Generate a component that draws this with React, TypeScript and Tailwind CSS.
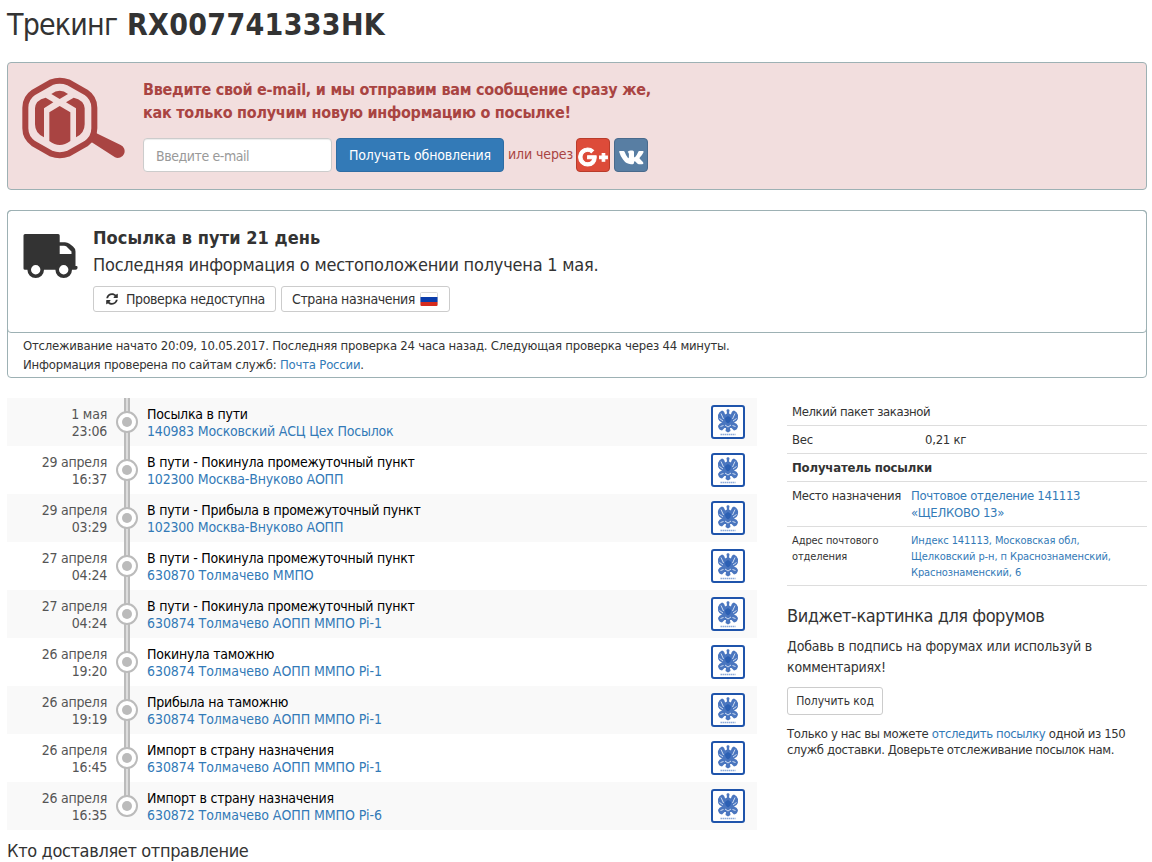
import type { ReactNode } from "react";
import { FaGooglePlusG, FaSyncAlt } from "react-icons/fa";

type TrackEvent = { date: string; time: string; status: string; place: string };

const events: TrackEvent[] = [
  { date: "1 мая", time: "23:06", status: "Посылка в пути", place: "140983 Московский АСЦ Цех Посылок" },
  { date: "29 апреля", time: "16:37", status: "В пути - Покинула промежуточный пункт", place: "102300 Москва-Внуково АОПП" },
  { date: "29 апреля", time: "03:29", status: "В пути - Прибыла в промежуточный пункт", place: "102300 Москва-Внуково АОПП" },
  { date: "27 апреля", time: "04:24", status: "В пути - Покинула промежуточный пункт", place: "630870 Толмачево ММПО" },
  { date: "27 апреля", time: "04:24", status: "В пути - Покинула промежуточный пункт", place: "630874 Толмачево АОПП ММПО Pi-1" },
  { date: "26 апреля", time: "19:20", status: "Покинула таможню", place: "630874 Толмачево АОПП ММПО Pi-1" },
  { date: "26 апреля", time: "19:19", status: "Прибыла на таможню", place: "630874 Толмачево АОПП ММПО Pi-1" },
  { date: "26 апреля", time: "16:45", status: "Импорт в страну назначения", place: "630874 Толмачево АОПП ММПО Pi-1" },
  { date: "26 апреля", time: "16:35", status: "Импорт в страну назначения", place: "630872 Толмачево АОПП ММПО Pi-6" },
];

function SearchParcelLogo() {
  return (
    <svg viewBox="36 36 309 246" className="h-[82px] w-[103px]" fill="#a94442">
      <path
        d="M124 52 Q149 42 175 52 L228 82 Q253 99 253 128 V190 Q253 219 228 236 L175 266 Q149 275 124 266 L71 236 Q46 219 46 190 V128 Q46 99 71 82 Z"
        fill="none"
        stroke="#a94442"
        strokeWidth="18"
      />
      <path d="M258 204 L332 240 A20 20 0 0 1 315 277 L244 231 Z" />
      <path d="M124 87 Q149 68 174 87 L149 102 Z" />
      <path d="M149 123 L181 142 V228 Q149 252 118 228 V142 Z" />
      <path d="M107 98 L130 112 L102 130 V217 Q75 205 75 178 V130 Q76 105 107 98 Z" />
      <path d="M191 98 L168 112 L198 130 V217 Q224 205 224 178 V130 Q222 105 191 98 Z" />
    </svg>
  );
}

function Truck() {
  return (
    <svg viewBox="0 0 55 46" className="h-[46px] w-[55px]">
      <path
        fill="#333"
        fillRule="evenodd"
        d="M2 1 H35.200 Q36.700 1 36.700 2.500 V9.300 H42 Q44.500 9.300 46.500 10.800 L50 13.500 Q52.500 15.500 52.500 18.500 V33 H53.500 Q54.500 33 54.500 34 V35 Q54.500 36.800 52.500 36.800 H2 Q.500 36.800 .500 35.500 V2.500 Q.500 1 2 1 Z M36.700 12.700 V21 H48.500 V18.500 L43.500 13.500 Q42.500 12.700 41 12.700 Z"
      />
      <circle cx="12.700" cy="36.800" r="6.500" fill="#fff" stroke="#333" strokeWidth="3.600" />
      <circle cx="40.700" cy="36.800" r="6.500" fill="#fff" stroke="#333" strokeWidth="3.600" />
    </svg>
  );
}

function VkMark() {
  return (
    <svg viewBox="0 0 25 15" className="mt-[4px] h-[15px] w-[25px] shrink-0" fill="#fff">
      <path d="M.8 1 H4.600 Q5.300 1 5.600 1.800 Q7 5.800 9 8 Q9.800 8.500 9.900 7 V4 Q9.800 2.500 8.600 2 Q9.300 .5 11.500 .4 H13.500 Q15 .5 15 2 V6.500 Q15.200 7.900 16.200 7 Q18 5 19.200 2 Q19.500 1 20.300 1 H23.800 Q25 1.100 24.400 2.500 Q23.300 4.900 20.800 7.600 Q20.300 8.300 21 9 L23.900 12 Q25.200 14 23 14.300 H19.800 Q19 14.200 18.300 13.500 L16.300 11.500 Q15.100 10.900 15 12.500 Q15 14.300 13.800 14.300 H12 Q7.200 14.200 4 9.600 Q1.500 6.300 .2 2 Q0 1.100 .8 1 Z" />
    </svg>
  );
}

function RussianFlag() {
  return (
    <svg viewBox="0 0 18 14" className="h-[14px] w-[18px]">
      <rect x="0.500" y="0.500" width="17" height="13" rx="1" fill="#fff" stroke="#d9d9d9" />
      <rect x="0.500" y="5" width="17" height="5" fill="#0a3cab" />
      <path d="M.5 10 H17.500 V13 Q17.500 14 16.500 14 H1.500 Q.5 14 .5 13 Z" fill="#d52b1e" />
    </svg>
  );
}

function PostStamp() {
  return (
    <svg viewBox="0 0 34 34" className="mr-3 h-[34px] w-[34px]">
      <rect x="1" y="1" width="32" height="32" rx="2" fill="#fff" stroke="#1f54ab" strokeWidth="2" />
      <path
        fill="#4a76bf"
        d="M17 4 L18.500 5 18 8.500 20 9.500 Q20.500 6 23 5.500 Q26 6.500 27 10 Q27.500 14 25.500 16 L23 17.500 Q26 18 27 21 Q26.500 25 23 25.500 L20.500 23 19 23 19.500 26 17 27.500 14.500 26 15 23 13.500 23 11 25.500 Q7.500 25 7 21 Q8 18 11 17.500 L8.500 16 Q6.500 14 7 10 Q8 6.500 11 5.500 Q13.500 6 14 9.500 L16 8.500 15.500 5 Z"
      />
      <path
        stroke="#dce6f5"
        strokeWidth="0.900"
        fill="none"
        d="M10 8.500 L12.500 14 M24 8.500 L21.500 14 M8.500 13.500 L12 16 M25.500 13.500 L22 16 M9.500 21.500 L12.500 20.500 M24.500 21.500 L21.500 20.500 M14 20 L17 22 20 20"
      />
      <path d="M17 11 L20 13 Q20 17 17 18.500 Q14 17 14 13 Z" fill="#2c60b3" />
      <path d="M9.500 29.500 H24.500" stroke="#8ba9d8" strokeWidth="1.500" strokeDasharray="1.500 0.500" />
    </svg>
  );
}

function Link({ children, className = "" }: { children: ReactNode; className?: string }) {
  return <a className={`text-[#337ab7] ${className}`}>{children}</a>;
}

function SubscribeAlert() {
  return (
    <section className="flex h-32 rounded border border-[#9db1b4] bg-[#f2dede] pt-[14px] pl-[14px] text-[#a94442]">
      <SearchParcelLogo />
      <div className="ml-[18px]">
        <p className="pt-px text-[16px] leading-[23px] font-bold tracking-[-0.25px]">
          Введите свой e-mail, и мы отправим вам сообщение сразу же,
          <br />
          как только получим новую информацию о посылке!
        </p>
        <div className="mt-[14px] flex items-center text-[14px]">
          <input
            placeholder="Введите e-mail"
            className="h-[34px] w-[189px] rounded border border-[#ccc] bg-white px-3 pt-[1px] tracking-[-0.42px] shadow-[inset_0_1px_1px_rgba(0,0,0,0.075)] placeholder:text-[#999]"
          />
          <button className="ml-1 h-[34px] w-[168px] rounded border border-[#2e6da4] bg-[#337ab7] tracking-[-0.17px] text-white">
            Получать обновления
          </button>
          <span className="ml-1 w-[68px] pb-px tracking-[-0.12px]">или через</span>
          <button className="flex h-[34px] w-[34px] items-center justify-center rounded border border-[#b93c2b] bg-[#dd4b39] text-white">
            <FaGooglePlusG size={30} stroke="currentColor" strokeWidth={22} className="mt-[3px] shrink-0" />
          </button>
          <button className="ml-1 flex h-[34px] w-[34px] items-center justify-center rounded border border-[#496a8c] bg-[#587ea3] text-white">
            <VkMark />
          </button>
        </div>
      </div>
    </section>
  );
}

function StatusPanel() {
  return (
    <section className="mt-5 h-[168px] rounded border border-[#9db1b4]">
      <div className="-mx-px -mt-px flex h-[123px] rounded border border-[#9db1b4] pt-[22px] pl-[15px]">
        <Truck />
        <div className="-mt-[9px] ml-[15px]">
          <h2 className="text-[18px] leading-[27px] font-bold tracking-[0.06px]">Посылка в пути 21 день</h2>
          <p className="text-[18px] leading-[27px] tracking-[-0.22px]">
            Последняя информация о местоположении получена 1 мая.
          </p>
          <div className="mt-2 flex gap-[5px] text-[14px]">
            <button className="flex h-[26px] w-[183px] items-center rounded-[3px] border border-[#ccc] bg-white pl-3 tracking-[-0.37px]">
              <FaSyncAlt size={12} className="mr-2" />
              Проверка недоступна
            </button>
            <button className="flex h-[26px] w-[169px] items-center rounded-[3px] border border-[#ccc] bg-white pl-[10px] tracking-[-0.39px]">
              <span className="mr-[5px]">Страна назначения</span>
              <RussianFlag />
            </button>
          </div>
        </div>
      </div>
      <div className="pt-[3px] pl-[15px] text-[13px] leading-[19px] tracking-[-0.215px]">
        <p>Отслеживание начато 20:09, 10.05.2017. Последняя проверка 24 часа назад. Следующая проверка через 44 минуты.</p>
        <p>
          Информация проверена по сайтам служб: <Link>Почта России</Link>.
        </p>
      </div>
    </section>
  );
}

function EventRow({ event, last }: { event: TrackEvent; last: boolean }) {
  const placeTracking = event.place.includes("ММПО") ? "tracking-[-0.07px]" : "tracking-[-0.19px]";
  return (
    <li className="flex h-12 items-center text-[14px] leading-[17px] odd:bg-[#f9f9f9]">
      <div className="w-[100px] pt-[2px] text-right tracking-[-0.22px] text-[#555]">
        <div>{event.date}</div>
        <div>{event.time}</div>
      </div>
      <div className="relative ml-[9px] flex h-12 w-[22px] items-center justify-center">
        <span className={`absolute top-0 left-2 w-[6px] border-x-2 border-[#bbb] bg-[#ddd] ${last ? "h-6" : "h-12"}`} />
        <span className="relative flex h-[22px] w-[22px] items-center justify-center rounded-full border-2 border-[#bbb] bg-white">
          <span className="h-[10px] w-[10px] rounded-full bg-[#bbb]" />
        </span>
      </div>
      <div className="ml-[9px] flex-1 pt-[2px]">
        <div className="tracking-[-0.24px] text-black">{event.status}</div>
        <Link className={`block ${placeTracking}`}>{event.place}</Link>
      </div>
      <PostStamp />
    </li>
  );
}

function Sidebar() {
  return (
    <aside className="ml-[30px] w-[360px]">
      <div className="text-[13px] leading-[17px]">
        <div className="h-7 border-b border-[#ddd] pt-[5px] pl-[5px] tracking-[-0.4px]">Мелкий пакет заказной</div>
        <div className="flex h-7 border-b border-[#ddd] pt-[5px] pl-[5px] tracking-[-0.25px]">
          <span className="w-[133px]">Вес</span>
          <span>0,21 кг</span>
        </div>
        <div className="h-7 border-b border-[#ddd] pt-[5px] pl-[5px] font-bold tracking-[-0.17px]">Получатель посылки</div>
        <div className="flex h-[45px] border-b border-[#ddd] pt-[5px] pl-[5px] tracking-[-0.29px]">
          <span className="w-[119px]">Место назначения</span>
          <Link>
            Почтовое отделение 141113
            <br />
            «ЩЕЛКОВО 13»
          </Link>
        </div>
        <div className="flex h-[59px] border-b border-[#ddd] pt-[6px] pl-[5px] text-[11px] leading-[16px] tracking-[-0.1px]">
          <span className="w-[119px]">
            Адрес почтового
            <br />
            отделения
          </span>
          <Link>
            Индекс 141113, Московская обл,
            <br />
            Щелковский р-н, п Краснознаменский,
            <br />
            Краснознаменский, 6
          </Link>
        </div>
      </div>
      <h3 className="mt-5 text-[18px] leading-5 tracking-[-0.46px]">Виджет-картинка для форумов</h3>
      <p className="mt-[10px] text-[14px] leading-[21px] tracking-[-0.21px]">
        Добавь в подпись на форумах или используй в
        <br />
        комментариях!
      </p>
      <button className="mt-[9px] block h-7 w-24 rounded-[3px] border border-[#ccc] bg-white text-[12px] tracking-[-0.03px]">
        Получить код
      </button>
      <p className="mt-[11px] text-[13px] leading-[16px] tracking-[-0.38px] whitespace-nowrap">
        Только у нас вы можете <Link>отследить посылку</Link> одной из 150
        <br />
        служб доставки. Доверьте отслеживание посылок нам.
      </p>
    </aside>
  );
}

export default function App() {
  return (
    <main className="h-[862px] w-[1152px] overflow-hidden bg-white pr-[5px] pl-[7px] font-['DejaVu_Sans_Condensed','DejaVu_Sans',sans-serif] font-stretch-condensed text-[#333]">
      <h1 className="flex h-[62px] pt-[5px] text-[30px] leading-[40px]">
        <span className="w-[120px] tracking-[-0.8px]">Трекинг</span>
        <b className="tracking-[0.3px]">RX007741333HK</b>
      </h1>
      <SubscribeAlert />
      <StatusPanel />
      <div className="mt-5 flex">
        <div className="w-[750px]">
          <ul>
            {events.map((event, i) => (
              <EventRow key={i} event={event} last={i === events.length - 1} />
            ))}
          </ul>
          <h3 className="pt-[10px] text-[18px] leading-[22px] tracking-[-0.35px]">Кто доставляет отправление</h3>
        </div>
        <Sidebar />
      </div>
    </main>
  );
}
